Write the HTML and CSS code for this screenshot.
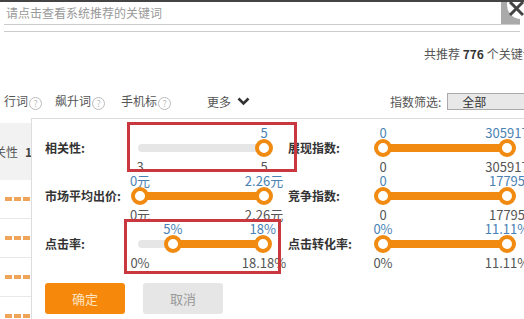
FILE: index.html
```html
<!DOCTYPE html>
<html lang="zh-CN">
<head>
  <meta charset="UTF-8">
  <meta name="viewport" content="width=device-width, initial-scale=1.0">
  <title>关键词筛选</title>
  <link rel="stylesheet" href="styles.css">
</head>
<body>
<div class="page">
  <div class="search">
    <span class="placeholder">请点击查看系统推荐的关键词</span>
    <span class="search-btn"></span>
  </div>
  <div class="divider"></div>
  <div class="summary">共推荐 <b>776</b> 个关键词</div>

  <div class="tabs">
    <span class="tab">行词<i class="help">?</i></span>
    <span class="tab">飙升词<i class="help">?</i></span>
    <span class="tab">手机标<i class="help">?</i></span>
    <span class="tab more">更多
      <svg width="13" height="9" viewBox="0 0 13 9"><polyline points="1.5,1.5 6.5,6.5 11.5,1.5" fill="none" stroke="#333" stroke-width="2.6"/></svg>
    </span>
    <span class="filter">指数筛选: <span class="select">全部</span></span>
  </div>

  <div class="table">
    <div class="thead"><span class="th">关性</span><b class="sort">1</b></div>
    <div class="row"><span class="dash"></span><span class="dash"></span><span class="dash"></span></div>
    <div class="row"><span class="dash"></span><span class="dash"></span><span class="dash"></span></div>
    <div class="row"><span class="dash"></span><span class="dash"></span><span class="dash"></span></div>
    <div class="row"><span class="dash"></span><span class="dash"></span><span class="dash"></span></div>
  </div>

  <div class="popup">
    <div class="grid">
      <div class="cell">
        <span class="label">相关性:</span>
        <div class="slider"><div class="rail">
          <span class="val top" style="left:100%">5</span>
          <div class="track"></div>
          <div class="fill" style="left:100%;width:0%"></div>
          <span class="knob" style="left:100%"></span>
          <span class="val bottom" style="left:0%">3</span>
          <span class="val bottom" style="left:100%">5</span>
        </div></div>
      </div>
      <div class="cell">
        <span class="label">展现指数:</span>
        <div class="slider"><div class="rail">
          <span class="val top" style="left:0%">0</span>
          <span class="val top" style="left:100%">305917</span>
          <div class="track"></div>
          <div class="fill" style="left:0%;width:100%"></div>
          <span class="knob" style="left:0%"></span>
          <span class="knob" style="left:100%"></span>
          <span class="val bottom" style="left:0%">0</span>
          <span class="val bottom" style="left:100%">305917</span>
        </div></div>
      </div>

      <div class="cell">
        <span class="label">市场平均出价:</span>
        <div class="slider"><div class="rail">
          <span class="val top" style="left:0%">0元</span>
          <span class="val top" style="left:100%">2.26元</span>
          <div class="track"></div>
          <div class="fill" style="left:0%;width:100%"></div>
          <span class="knob" style="left:0%"></span>
          <span class="knob" style="left:100%"></span>
          <span class="val bottom" style="left:0%">0元</span>
          <span class="val bottom" style="left:100%">2.26元</span>
        </div></div>
      </div>
      <div class="cell">
        <span class="label">竞争指数:</span>
        <div class="slider"><div class="rail">
          <span class="val top" style="left:0%">0</span>
          <span class="val top" style="left:100%">17795</span>
          <div class="track"></div>
          <div class="fill" style="left:0%;width:100%"></div>
          <span class="knob" style="left:0%"></span>
          <span class="knob" style="left:100%"></span>
          <span class="val bottom" style="left:0%">0</span>
          <span class="val bottom" style="left:100%">17795</span>
        </div></div>
      </div>

      <div class="cell">
        <span class="label">点击率:</span>
        <div class="slider"><div class="rail">
          <span class="val top" style="left:26.5%">5%</span>
          <span class="val top" style="left:99%">18%</span>
          <div class="track"></div>
          <div class="fill" style="left:26.5%;width:72.5%"></div>
          <span class="knob" style="left:26.5%"></span>
          <span class="knob" style="left:99%"></span>
          <span class="val bottom" style="left:0%">0%</span>
          <span class="val bottom" style="left:100%">18.18%</span>
        </div></div>
      </div>
      <div class="cell">
        <span class="label">点击转化率:</span>
        <div class="slider"><div class="rail">
          <span class="val top" style="left:0%">0%</span>
          <span class="val top" style="left:100%">11.11%</span>
          <div class="track"></div>
          <div class="fill" style="left:0%;width:100%"></div>
          <span class="knob" style="left:0%"></span>
          <span class="knob" style="left:100%"></span>
          <span class="val bottom" style="left:0%">0%</span>
          <span class="val bottom" style="left:100%">11.11%</span>
        </div></div>
      </div>
    </div>

    <div class="actions">
      <button class="btn btn-ok">确定</button>
      <button class="btn btn-cancel">取消</button>
    </div>

    <div class="mark mark-a"></div>
    <div class="mark mark-b"></div>
  </div>

  <svg class="close" width="30" height="24" viewBox="0 0 30 24">
    <circle cx="21" cy="3" r="14" fill="#fff"/>
    <line x1="10" y1="0" x2="23" y2="13" stroke="#444" stroke-width="3"/>
    <line x1="23" y1="0" x2="10" y2="13" stroke="#444" stroke-width="3"/>
  </svg>
</div>
</body>
</html>
```

FILE: styles.css
```css
html, body {
  margin: 0;
  overflow: hidden;
}
body {
  font-family: "Noto Sans CJK SC", "Liberation Sans", sans-serif;
  font-size: 12px;
  color: #555;
  background: #fff;
}
.page {
  position: relative;
  width: 524px;
  height: 317px;
  border-top: 2px solid #444;
  overflow: hidden;
}
.search {
  display: flex;
  justify-content: space-between;
  width: 516px;
  height: 22px;
  margin: 0 4px;
  border-bottom: 1px solid #ccc;
}
.placeholder {
  padding-left: 2px;
  line-height: 22px;
  color: #999;
}
.search-btn {
  width: 19px;
  background: #aaa;
}
.divider {
  width: 516px;
  height: 1px;
  margin: 6px 4px 0;
  background: #ccc;
}
.summary {
  margin-top: 12px;
  padding-left: 424px;
  line-height: 20px;
  white-space: nowrap;
}
.summary b {
  color: #333;
}
.tabs {
  display: grid;
  grid-template-columns: 51px 66px 86px 183px auto;
  align-items: center;
  height: 20px;
  margin-top: 27px;
  padding-left: 4px;
  white-space: nowrap;
}
.help {
  display: inline-block;
  width: 11px;
  height: 11px;
  margin-left: 1px;
  border: 1px solid #bbb;
  border-radius: 50%;
  font-style: normal;
  font-size: 9px;
  line-height: 11px;
  text-align: center;
  color: #bbb;
  vertical-align: -1px;
}
.more svg {
  margin-left: 3px;
  vertical-align: 1px;
}
.filter {
  display: flex;
  align-items: center;
  gap: 6px;
}
.select {
  width: 75px;
  height: 15px;
  padding-left: 14px;
  border: 1px solid #aaa;
  background: #e8e8e8;
  line-height: 15px;
  color: #333;
}
.table {
  margin-top: 12px;
}
.thead {
  display: flex;
  align-items: center;
  height: 57px;
  background: #f2f2f2;
}
.th {
  margin-left: -6px;
}
.sort {
  margin-left: 7px;
  color: #444;
}
.row {
  display: flex;
  align-items: center;
  gap: 2px;
  height: 38px;
  padding-left: 5px;
  border-bottom: 1px solid #e8e8e8;
}
.dash {
  width: 7px;
  height: 4px;
  background: #f0a45a;
}
.popup {
  position: absolute;
  top: 116px;
  left: 31px;
  width: 560px;
  height: 194px;
  padding: 7px 0 0 13px;
  border: 1px solid #ddd;
  border-bottom: none;
  background: #fff;
}
.grid {
  display: grid;
  grid-template-columns: 243px 243px;
}
.cell {
  display: flex;
  height: 48px;
}
.label {
  width: 86px;
  line-height: 44px;
  font-weight: bold;
  color: #333;
  white-space: nowrap;
}
.slider {
  width: 142px;
}
.rail {
  position: relative;
  height: 48px;
  margin: 0 9px;
}
.val {
  position: absolute;
  transform: translateX(-50%);
  font-size: 13px;
  line-height: 14px;
  white-space: nowrap;
}
.val.top {
  top: 0;
  color: #4a82b4;
}
.val.bottom {
  top: 34px;
  color: #555;
}
.track {
  position: absolute;
  top: 18px;
  left: -2px;
  right: -2px;
  height: 8px;
  border-radius: 4px;
  background: #e6e6e6;
}
.fill {
  position: absolute;
  top: 18px;
  height: 8px;
  background: #f08a10;
}
.knob {
  position: absolute;
  top: 13px;
  width: 18px;
  height: 18px;
  box-sizing: border-box;
  border: 4px solid #f08a10;
  border-radius: 50%;
  background: #fff;
  transform: translateX(-50%);
}
.actions {
  display: flex;
  gap: 18px;
  margin-top: 13px;
}
.btn {
  width: 80px;
  height: 31px;
  border: none;
  border-radius: 3px;
  font-family: inherit;
  font-size: 13px;
}
.btn-ok {
  background: #f6890c;
  color: #ffe3c2;
}
.btn-cancel {
  background: #e6e6e6;
  color: #999;
}
.mark {
  position: absolute;
  border: 3px solid #c9383f;
}
.mark-a {
  left: 95px;
  top: 3px;
  width: 164px;
  height: 44px;
}
.mark-b {
  left: 92px;
  top: 100px;
  width: 151px;
  height: 49px;
}
.close {
  position: absolute;
  top: 0;
  left: 500px;
}
```
